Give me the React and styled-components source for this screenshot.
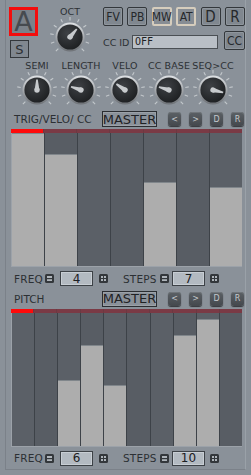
import React, { useId } from 'react';
import styled, { createGlobalStyle } from 'styled-components';

const Global = createGlobalStyle`
  html, body { margin: 0; padding: 0; background: #8a9199; }
`;

const Shell = styled.div`
  width: 251px;
  height: 475px;
  background: #8a9199;
  font-family: "DejaVu Sans", sans-serif;
  color: #2c3034;
  overflow: hidden;
`;

const Frame = styled.div`
  margin-left: 5px;
  width: 241px;
  height: 470px;
  box-sizing: border-box;
  border-left: 1px solid #7b8189;
  border-right: 1px solid #9aa1a8;
  border-bottom: 1px solid #7b8189;
  display: flex;
  flex-direction: column;
`;

/* ---------- header ---------- */

const Top = styled.div`
  display: flex;
  padding: 7px 0 0 3px;
  height: 60px;
  box-sizing: border-box;
`;

const LeftCol = styled.div`
  display: flex;
  flex-direction: column;
  width: 29px;
`;

const ABtn = styled.div`
  width: 29px;
  height: 29px;
  box-sizing: border-box;
  border: 3px solid #f30d0d;
  background: #7b8189;
  display: flex;
  align-items: center;
  justify-content: center;
  font-size: 27px;
  color: #464a4f;
  line-height: 1;
`;

const SBtn = styled.div`
  margin: 4px 0 0 1px;
  width: 19px;
  height: 18px;
  box-sizing: border-box;
  border: 1px solid #33373b;
  background: #80878f;
  display: flex;
  align-items: center;
  justify-content: center;
  font-size: 13px;
`;

const OctCol = styled.div`
  margin-left: 12px;
  width: 40px;
  display: flex;
  flex-direction: column;
  align-items: center;
`;

const SmallLabel = styled.div`
  font-size: 9.5px;
  line-height: 10px;
  letter-spacing: 0.1px;
  white-space: nowrap;
`;

const RightCol = styled.div`
  margin-left: 13px;
  display: flex;
  flex-direction: column;
`;

const BtnRow = styled.div`
  display: flex;
  gap: 4.4px;
`;

const ModBtn = styled.div`
  width: 20px;
  height: 19px;
  box-sizing: border-box;
  border: ${p => (p.$on ? '2px solid #d6cdbd' : '1px solid #33373b')};
  border-radius: 2px;
  background: ${p => (p.$on ? '#878d94' : '#80878f')};
  box-shadow: ${p => (p.$on ? 'none' : 'inset 0 0 0 1px #8f969d')};
  display: flex;
  align-items: center;
  justify-content: center;
  font-family: "DejaVu Sans Condensed", "DejaVu Sans", sans-serif;
  font-size: ${p => (p.$big ? '15px' : '12px')};
  color: #25282b;
`;

const CcRow = styled.div`
  display: flex;
  align-items: center;
  margin-top: 5px;
`;

const CcLabel = styled.div`
  font-size: 9.5px;
  width: 29px;
  margin-top: 3px;
  white-space: nowrap;
`;

const CcInput = styled.div`
  width: 86px;
  height: 14px;
  box-sizing: border-box;
  margin-top: 3px;
  border: 1px solid #4a4f54;
  background: #b9bfc6;
  font-family: "DejaVu Sans Mono", monospace;
  font-size: 10px;
  line-height: 12px;
  padding-left: 2px;
  color: #1e2124;
`;

const CcBtn = styled(ModBtn)`
  width: 21px;
  margin-left: 6px;
  font-size: 12px;
`;

/* ---------- knobs ---------- */

const KnobRow = styled.div`
  display: flex;
  padding-left: 9px;
  height: 51px;
`;

const KnobCell = styled.div`
  width: 44px;
  display: flex;
  flex-direction: column;
  align-items: center;
  padding-top: 1px;
`;

const KnobSvg = styled.svg`
  display: block;
  margin-top: ${p => p.$mt}px;
  flex: none;
`;

const Knob = ({ angle, mt = -3 }) => {
  const id = useId().replace(/:/g, '');
  const c = 22;
  const ticks = [];
  for (let i = 0; i < 11; i++) {
    const a = ((-135 + i * 27) * Math.PI) / 180;
    ticks.push(
      <line
        key={i}
        x1={c + Math.sin(a) * 16.5}
        y1={c - Math.cos(a) * 16.5}
        x2={c + Math.sin(a) * 20}
        y2={c - Math.cos(a) * 20}
        stroke="#c3c8cc"
        strokeWidth="1.1"
      />
    );
  }
  return (
    <KnobSvg width="44" height="44" viewBox="0 0 44 44" $mt={mt}>
      <defs>
        <linearGradient id={`rim${id}`} x1="0" y1="0" x2="0" y2="1">
          <stop offset="0" stopColor="#dfe2e5" />
          <stop offset="1" stopColor="#6d7176" />
        </linearGradient>
        <radialGradient id={`face${id}`} cx="0.4" cy="0.35" r="0.7">
          <stop offset="0" stopColor="#3e4145" />
          <stop offset="1" stopColor="#1d1f21" />
        </radialGradient>
      </defs>
      {ticks}
      <circle cx={c} cy={c} r="14.5" fill={`url(#rim${id})`} />
      <circle cx={c} cy={c} r="12.6" fill={`url(#face${id})`} />
      <g transform={`rotate(${angle} ${c} ${c})`}>
        <path d={`M${c - 2.4} ${c} L${c - 0.8} ${c - 10.5} L${c + 0.8} ${c - 10.5} L${c + 2.4} ${c} Z`} fill="#c7cacd" />
        <circle cx={c} cy={c} r="2.7" fill="#c7cacd" />
      </g>
    </KnobSvg>
  );
};

/* ---------- sections ---------- */

const SectionHead = styled.div`
  display: flex;
  align-items: center;
  height: 17px;
  padding-left: 8px;
`;

const SectionTitle = styled.div`
  width: 88px;
  font-size: 10.5px;
  white-space: nowrap;
`;

const MasterBtn = styled.div`
  width: 55px;
  height: 16px;
  box-sizing: border-box;
  border: 1px solid #2b2e32;
  box-shadow: inset 0 0 0 1px #9ba1a8;
  display: flex;
  align-items: center;
  justify-content: center;
  font-size: 13px;
  color: #1f2225;
`;

const NavGroup = styled.div`
  display: flex;
  margin-left: 11px;
  gap: 8px;
`;

const NavBtn = styled.div`
  width: 13px;
  height: 14px;
  border-radius: 3px;
  background: linear-gradient(#5c6166, #44484d);
  box-shadow: 0 1px 1px #33363a, inset 0 1px 0 #70757a;
  display: flex;
  align-items: center;
  justify-content: center;
  font-size: 8px;
  color: #c4c8cc;
`;

const Lane = styled.div`
  margin: ${p => p.$mt}px 3px 0 5px;
  display: flex;
  flex-direction: column;
`;

const RedBar = styled.div`
  display: flex;
  height: 4px;
`;

const RedSeg = styled.div`
  flex: 1;
  background: ${p => (p.$on ? '#ff0a0a' : '#7a3a45')};
  border-left: ${p => (p.$first ? 'none' : '1px solid #6b3a42')};
`;

const Grid = styled.div`
  display: flex;
  height: 134px;
  background: #5a5f66;
  border-bottom: 1px solid #9ca2a9;
  box-sizing: border-box;
`;

const Col = styled.div`
  flex: 1;
  display: flex;
  flex-direction: column;
  justify-content: flex-end;
  border-left: ${p => (p.$first ? '1px solid #9ca2a9' : '1px solid #3d4248')};
  background: ${p => (p.$alt ? '#585d64' : '#5b6067')};
`;

const Bar = styled.div`
  background: #adadad;
  border-top: 1px solid #80868b;
`;

const Steps = ({ values, mt }) => (
  <Lane $mt={mt}>
    <RedBar>
      {values.map((_, i) => (
        <RedSeg key={i} $on={i === 0} $first={i === 0} />
      ))}
    </RedBar>
    <Grid>
      {values.map((v, i) => (
        <Col key={i} $first={i === 0} $alt={i % 2 === 1}>
          {v > 0 && <Bar style={{ height: `${v}%` }} />}
        </Col>
      ))}
    </Grid>
  </Lane>
);

const FreqRow = styled.div`
  display: flex;
  align-items: center;
  height: ${p => p.$h}px;
  padding-left: 8px;
`;

const FreqLabel = styled.div`
  font-size: 10.5px;
  width: ${p => p.$w}px;
  color: #2c3034;
  letter-spacing: 0.2px;
`;

const Field = styled.div`
  width: 33px;
  height: 15px;
  box-sizing: border-box;
  margin: 0 6px;
  border: 1px solid #3d4247;
  background: #b3bac1;
  box-shadow: inset 0 0 0 1px #c8ced4;
  display: flex;
  align-items: center;
  justify-content: center;
  font-size: 12px;
  color: #1d2023;
`;

const IconBox = styled.svg`
  display: block;
  flex: none;
`;

const Minus = () => (
  <IconBox width="9" height="9" viewBox="0 0 9 9">
    <rect x="0" y="0" width="9" height="9" rx="1.5" fill="#33373b" />
    <rect x="2" y="2" width="5" height="5" fill="#aeb4ba" />
    <rect x="2" y="4" width="5" height="1.2" fill="#33373b" />
  </IconBox>
);

const Plus = () => (
  <IconBox width="9" height="9" viewBox="0 0 9 9">
    <rect x="0" y="0" width="9" height="9" rx="1.5" fill="#33373b" />
    <rect x="2" y="2" width="2" height="2" fill="#aeb4ba" />
    <rect x="5" y="2" width="2" height="2" fill="#aeb4ba" />
    <rect x="2" y="5" width="2" height="2" fill="#aeb4ba" />
    <rect x="5" y="5" width="2" height="2" fill="#aeb4ba" />
  </IconBox>
);

const Spacer = styled.div`
  width: ${p => p.$w}px;
  flex: none;
`;

const Counters = ({ freq, steps, h }) => (
  <FreqRow $h={h}>
    <FreqLabel $w={31}>FREQ</FreqLabel>
    <Minus />
    <Field>{freq}</Field>
    <Plus />
    <Spacer $w={15} />
    <FreqLabel $w={37}>STEPS</FreqLabel>
    <Minus />
    <Field style={{ margin: '0 5px 0 3px' }}>{steps}</Field>
    <Plus />
  </FreqRow>
);

const Header = ({ title }) => (
  <SectionHead>
    <SectionTitle>{title}</SectionTitle>
    <MasterBtn>MASTER</MasterBtn>
    <NavGroup>
      <NavBtn>&lt;</NavBtn>
      <NavBtn>&gt;</NavBtn>
      <NavBtn>D</NavBtn>
      <NavBtn>R</NavBtn>
    </NavGroup>
  </SectionHead>
);

const knobs = [
  ['SEMI', 0],
  ['LENGTH', -72],
  ['VELO', -55],
  ['CC BASE', -74],
  ['SEQ>CC', 104],
];

export default function App() {
  return (
    <Shell>
      <Global />
      <Frame>
        <Top>
          <LeftCol>
            <ABtn>A</ABtn>
            <SBtn>S</SBtn>
          </LeftCol>
          <OctCol>
            <SmallLabel>OCT</SmallLabel>
            <Knob angle={40} mt={-2} />
          </OctCol>
          <RightCol>
            <BtnRow>
              <ModBtn>FV</ModBtn>
              <ModBtn>PB</ModBtn>
              <ModBtn $on>MW</ModBtn>
              <ModBtn $on>AT</ModBtn>
              <ModBtn $big>D</ModBtn>
              <ModBtn $big>R</ModBtn>
            </BtnRow>
            <CcRow>
              <CcLabel>CC ID</CcLabel>
              <CcInput>OFF</CcInput>
              <CcBtn>CC</CcBtn>
            </CcRow>
          </RightCol>
        </Top>
        <KnobRow>
          {knobs.map(([label, a]) => (
            <KnobCell key={label}>
              <SmallLabel>{label}</SmallLabel>
              <Knob angle={a} />
            </KnobCell>
          ))}
        </KnobRow>
        <Header title="TRIG/VELO/ CC" />
        <Steps mt={2} values={[100, 84, 0, 0, 63, 0, 59]} />
        <Counters freq="4" steps="7" h={23} />
        <Header title="PITCH" />
        <Steps mt={2} values={[0, 0, 49, 75, 45, 0, 0, 83, 95, 0]} />
        <Counters freq="6" steps="10" h={22} />
      </Frame>
    </Shell>
  );
}
